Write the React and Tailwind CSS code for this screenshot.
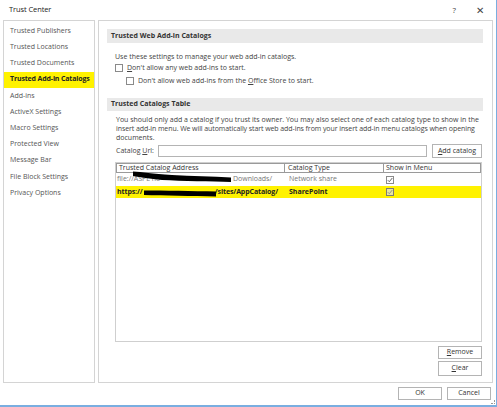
import React from "react";

const F = { fontFamily: '"Open Sans", "Noto Sans", sans-serif' };

function Box({ checked, dim }) {
  return (
    <div
      className={
        "w-[8px] h-[8px] border flex items-center justify-center " +
        (dim ? "border-[#7a7a7a] bg-[#e6e6a0]" : "border-[#8a8a8a] bg-white")
      }
    >
      {checked && (
        <svg width="6" height="6" viewBox="0 0 6 6">
          <path d="M0.8 3.2 L2.3 4.7 L5.3 1" fill="none" stroke={dim ? "#8a8a8a" : "#555"} strokeWidth="0.9" />
        </svg>
      )}
    </div>
  );
}

function Btn({ children, className = "" }) {
  return (
    <div
      className={
        "h-[13px] border border-[#b4b4b4] bg-white flex items-center justify-center text-[7px] text-[#333] " +
        className
      }
    >
      {children}
    </div>
  );
}

const nav = [
  "Trusted Publishers",
  "Trusted Locations",
  "Trusted Documents",
  "Trusted Add-in Catalogs",
  "Add-ins",
  "ActiveX Settings",
  "Macro Settings",
  "Protected View",
  "Message Bar",
  "File Block Settings",
  "Privacy Options",
];

export default function App() {
  return (
    <div
      style={F}
      className="w-[497px] h-[407px] bg-white relative border-r border-b-2 border-[#7aaee0] flex flex-col overflow-hidden text-[#444]"
    >
      {/* title */}
      <div className="h-[20px] flex items-center pl-[9px] pr-[12px]">
        <span className="text-[7.5px] text-[#222] tracking-[-0.1px]">Trust Center</span>
        <span className="ml-auto text-[8px] text-[#444]">?</span>
        <span className="ml-[20px] text-[10px] leading-none text-[#444] font-light">✕</span>
      </div>
      {/* body */}
      <div className="flex pl-[3px] gap-[3px] h-[363px]">
        <div className="w-[92px] h-full border border-[#d4d4d4] pt-[2px]">
          {nav.map((n, i) => (
            <div
              key={n}
              className={
                "h-[16.2px] flex items-center pl-[6px] text-[7px] " +
                (i === 3 ? "bg-[#fff200] text-[#222] font-bold tracking-[-0.15px]" : "text-[#555]")
              }
            >
              {n}
            </div>
          ))}
        </div>
        <div className="w-[395px] h-full border border-[#d4d4d4] pl-[8px] pr-[9px] pt-[8px] flex flex-col">
          <div className="h-[14px] bg-[#e9e9e9] flex items-center pl-[4px] text-[7px] font-bold text-[#333]">
            Trusted Web Add-in Catalogs
          </div>
          <div className="pl-[8px] mt-[9px] text-[7px] leading-[10px]">
            Use these settings to manage your web add-in catalogs.
          </div>
          <div className="pl-[8px] flex items-center gap-[4px] h-[12px] text-[7px]">
            <Box />
            <span>
              <span className="underline">D</span>on't allow any web add-ins to start.
            </span>
          </div>
          <div className="pl-[19px] mt-[1px] flex items-center gap-[4px] h-[12px] text-[7px]">
            <Box />
            <span>
              Don't allow web add-ins from the <span className="underline">O</span>ffice Store to start.
            </span>
          </div>
          <div className="mt-[11px] h-[13px] bg-[#e9e9e9] flex items-center pl-[4px] text-[7px] font-bold text-[#333]">
            Trusted Catalogs Table
          </div>
          <div className="pl-[9px] mt-[4px] text-[7px] leading-[9px] whitespace-nowrap">
            <div>You should only add a catalog if you trust its owner. You may also select one of each catalog type to show in the</div>
            <div className="tracking-[-0.08px]">
              insert add-in menu. We will automatically start web add-ins from your insert add-in menu catalogs when opening
            </div>
            <div>documents.</div>
          </div>
          <div className="pl-[9px] mt-[2px] flex items-center h-[14px] text-[7px]">
            <span className="w-[42px]">
              Catalog <span className="underline">U</span>rl:
            </span>
            <div className="w-[269px] h-[12px] border border-[#b4b4b4] bg-white" />
            <Btn className="ml-[5px] w-[50px] h-[14px]">
              <span className="underline">A</span>dd catalog
            </Btn>
          </div>
          {/* table */}
          <div className="ml-[8px] mt-[4px] w-[367px] h-[180px] border border-[#cfcfcf] flex flex-col text-[7px]">
            <div className="flex h-[10px] text-[#333]">
              <div className="w-[169px] border border-[#9a9a9a] flex items-center pl-[2px]">Trusted Catalog Address</div>
              <div className="w-[99px] border-y border-r border-[#9a9a9a] flex items-center pl-[3px]">Catalog Type</div>
              <div className="flex-1 border-y border-r border-[#9a9a9a] flex items-center pl-[2px]">Show in Menu</div>
            </div>
            <div className="flex h-[13px] items-center text-[#777]">
              <div className="w-[169px] pl-[1px] relative flex items-center">
                <span>file://ASPL ho</span>
                <svg className="absolute left-[16px] top-[-4px]" width="100" height="16" viewBox="0 0 100 16">
                  <path d="M1 1.5 C 10 2, 20 4, 40 5 C 60 6, 80 6.5, 99 7.5 L 99 12 C 80 11.5, 50 11, 30 10 C 18 9, 8 7, 1 6 Z" fill="#000" />
                </svg>
                <span className="ml-auto mr-[13px]">Downloads/</span>
              </div>
              <div className="w-[99px] pl-[4px]">Network share</div>
              <div className="flex-1 pl-[2px]">
                <Box checked />
              </div>
            </div>
            <div className="flex h-[12px] items-center bg-[#fff200] text-[#222] font-bold">
              <div className="w-[169px] pl-[1px] relative flex items-center tracking-[-0.1px]">
                <span>https://</span>
                <svg className="absolute left-[27px] top-[1px]" width="74" height="10" viewBox="0 0 74 10">
                  <path d="M1 2.5 C 20 2.5, 50 3, 73 3.5 L 73 8.5 C 50 8, 20 7.5, 1 7 Z" fill="#000" />
                </svg>
                <span className="ml-auto mr-[7px]">/sites/AppCatalog/</span>
              </div>
              <div className="w-[99px] pl-[4px]">SharePoint</div>
              <div className="flex-1 pl-[2px]">
                <Box checked dim />
              </div>
            </div>
          </div>
          <div className="self-end mr-[1px] mt-[4px] flex flex-col gap-[2px]">
            <Btn className="w-[44px]">
              <span>
                <span className="underline">R</span>emove
              </span>
            </Btn>
            <Btn className="w-[44px] h-[15px]">
              <span>
                <span className="underline">C</span>lear
              </span>
            </Btn>
          </div>
        </div>
      </div>
      {/* footer */}
      <div className="flex justify-end gap-[5px] pr-[5px] mt-[4px]">
        <Btn className="w-[44px] h-[12px] border-[#3b7dc4]">OK</Btn>
        <Btn className="w-[44px] h-[12px]">Cancel</Btn>
      </div>
      <div className="absolute right-[1px] bottom-[1px] w-[4px] h-[4px] border-r border-b border-dotted border-[#999]" />
    </div>
  );
}
